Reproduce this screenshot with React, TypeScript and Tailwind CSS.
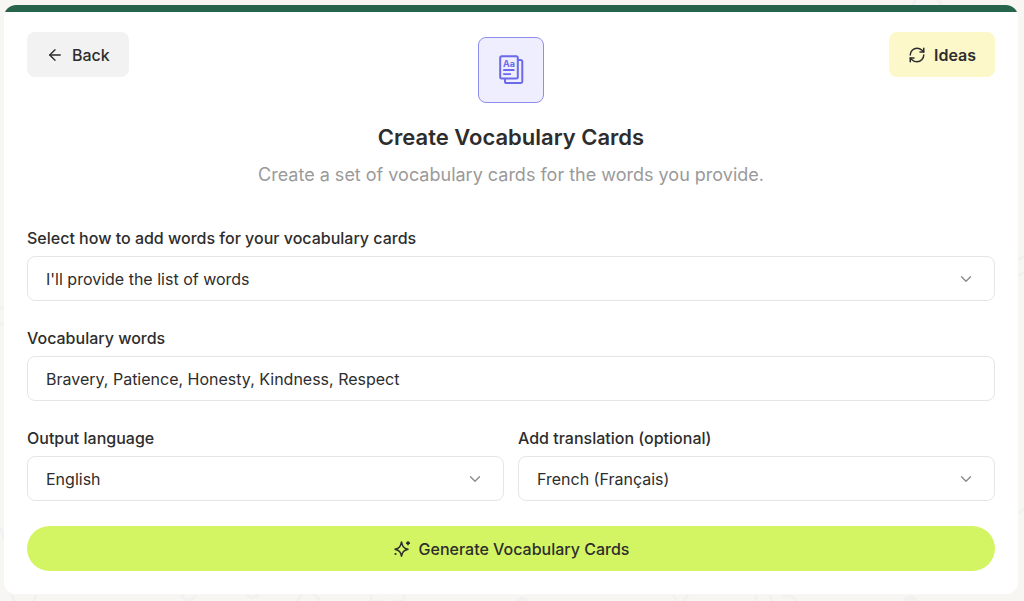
import type { ReactNode } from "react";
import { ArrowLeft, ChevronDown, RefreshCw } from "lucide-react";

const FIELD =
  "h-[45px] w-full rounded-lg border border-[#e6e6e6] bg-white px-[18px] text-base text-[#2d2d2d] outline-none focus:border-[#8d8df0]";

interface FieldProps {
  id: string;
  label: string;
  children: ReactNode;
}

function Field({ id, label, children }: FieldProps) {
  return (
    <div className="flex flex-col gap-1.5">
      <label htmlFor={id} className="text-base leading-6 font-medium">
        {label}
      </label>
      {children}
    </div>
  );
}

function Select({ id, options }: { id: string; options: string[] }) {
  return (
    <div className="relative">
      <select id={id} className={`${FIELD} appearance-none`}>
        {options.map((option) => (
          <option key={option}>{option}</option>
        ))}
      </select>
      <ChevronDown
        size={18}
        strokeWidth={1.8}
        className="pointer-events-none absolute inset-y-0 right-5 my-auto text-[#8a8a8a]"
      />
    </div>
  );
}

function CardsIcon() {
  return (
    <svg width="28" height="32" viewBox="0 0 28 32" fill="none" stroke="#6a6aeb" strokeWidth="2">
      <path d="M21 6h2.700A1.600 1.600 0 0 1 25.300 7.600v19.800a1.600 1.600 0 0 1-1.600 1.600H9.600A1.600 1.600 0 0 1 8 27.400V25" />
      <rect x="3.200" y="2.300" width="17.600" height="22.200" rx="1.500" fill="#eeeefe" />
      <path d="M6.200 16h11.300M6.200 20.200h7.800" strokeWidth="1.800" />
      <text
        x="12"
        y="12.500"
        textAnchor="middle"
        fontSize="9"
        fontWeight="700"
        fontFamily="Inter, sans-serif"
        fill="#6a6aeb"
        stroke="none"
      >
        Aa
      </text>
    </svg>
  );
}

function SparkleIcon() {
  return (
    <svg width="18" height="18" viewBox="0 0 18 18" fill="none" stroke="currentColor" strokeWidth="1.500" strokeLinejoin="round">
      <path d="M8.500 2c.9 4.600 2.200 6.100 6.500 7.200-4.300 1.100-5.600 2.500-6.500 7-.9-4.500-2.200-5.900-6.500-7C6.300 8.100 7.600 6.600 8.500 2Z" />
      <path d="M15 1.200v4M13 3.200h4" strokeWidth="1.700" />
      <circle cx="2.500" cy="14" r="1.100" fill="currentColor" stroke="none" />
    </svg>
  );
}

// Faint doodles behind the card
function Backdrop() {
  return (
    <svg className="absolute inset-0 -z-10 h-full w-full" fill="none" stroke="#f1f1f0" strokeWidth="3">
      <path d="M913 5q3-10 14-10t14 10M1018 260l6-4M1018 276l6-4M1019 514q3-5 6-5" />
      <path d="M0 308h4M0 324h4M0 528q4 6 4 12" />
      <path d="M12 595q2 8 8 12M36 595q-2 8-6 12M181 595q8 10 15 0M247 595q5 5 12 0" />
      <path d="M296 603q6-12 12-12t13 12M371 595v6h12v6M404 595v6h-11v6" />
      <path d="M673 595l7 10 8-10M757 595l-4 10M770 595l3 10M783 597q12-4 14 8" />
      <circle cx="522" cy="604" r="6" fill="#f1f1f0" />
      <circle cx="910" cy="604" r="7" fill="#f1f1f0" />
    </svg>
  );
}

export default function App() {
  return (
    <div className="relative isolate min-h-screen overflow-hidden bg-[#f7f6f3] pt-[5px] pr-1.5 pb-1.5 pl-1 font-[Inter,sans-serif] text-[#2d2d2d]">
      <Backdrop />
      <main className="overflow-hidden rounded-xl bg-white">
        <div className="h-[7px] bg-[#28634b]" />
        <div className="px-[23px] pt-5 pb-[23px]">
          <header className="grid grid-cols-[1fr_auto_1fr] items-start">
            <button
              type="button"
              className="flex h-[45px] items-center gap-2 justify-self-start rounded-lg bg-[#f2f2f2] px-[19px] text-base font-medium"
            >
              <ArrowLeft size={18} strokeWidth={1.8} />
              Back
            </button>
            <div className="flex flex-col items-center pt-[5px] text-center">
              <div className="flex size-[66px] items-center justify-center rounded-lg border border-[#8d8df0] bg-[#eeeefe]">
                <CardsIcon />
              </div>
              <h1 className="mt-[18px] text-[22px] leading-8 font-semibold">Create Vocabulary Cards</h1>
              <p className="mt-2 text-lg leading-7 text-[#9a9a9a]">
                Create a set of vocabulary cards for the words you provide.
              </p>
            </div>
            <button
              type="button"
              className="flex h-[45px] items-center gap-2 justify-self-end rounded-lg bg-[#fdf8ca] px-[19px] text-base font-semibold"
            >
              <RefreshCw size={18} strokeWidth={2} />
              Ideas
            </button>
          </header>

          <form className="mt-[37px] flex flex-col gap-[25px]" onSubmit={(e) => e.preventDefault()}>
            <Field id="source" label="Select how to add words for your vocabulary cards">
              <Select id="source" options={["I'll provide the list of words"]} />
            </Field>
            <Field id="words" label="Vocabulary words">
              <input
                id="words"
                type="text"
                defaultValue="Bravery, Patience, Honesty, Kindness, Respect"
                className={FIELD}
              />
            </Field>
            <div className="grid grid-cols-2 gap-3.5">
              <Field id="language" label="Output language">
                <Select id="language" options={["English"]} />
              </Field>
              <Field id="translation" label="Add translation (optional)">
                <Select id="translation" options={["French (Français)"]} />
              </Field>
            </div>
            <button
              type="submit"
              className="flex h-[45px] w-full items-center justify-center gap-2 rounded-full bg-[#d4f563] text-base font-medium"
            >
              <SparkleIcon />
              Generate Vocabulary Cards
            </button>
          </form>
        </div>
      </main>
    </div>
  );
}
